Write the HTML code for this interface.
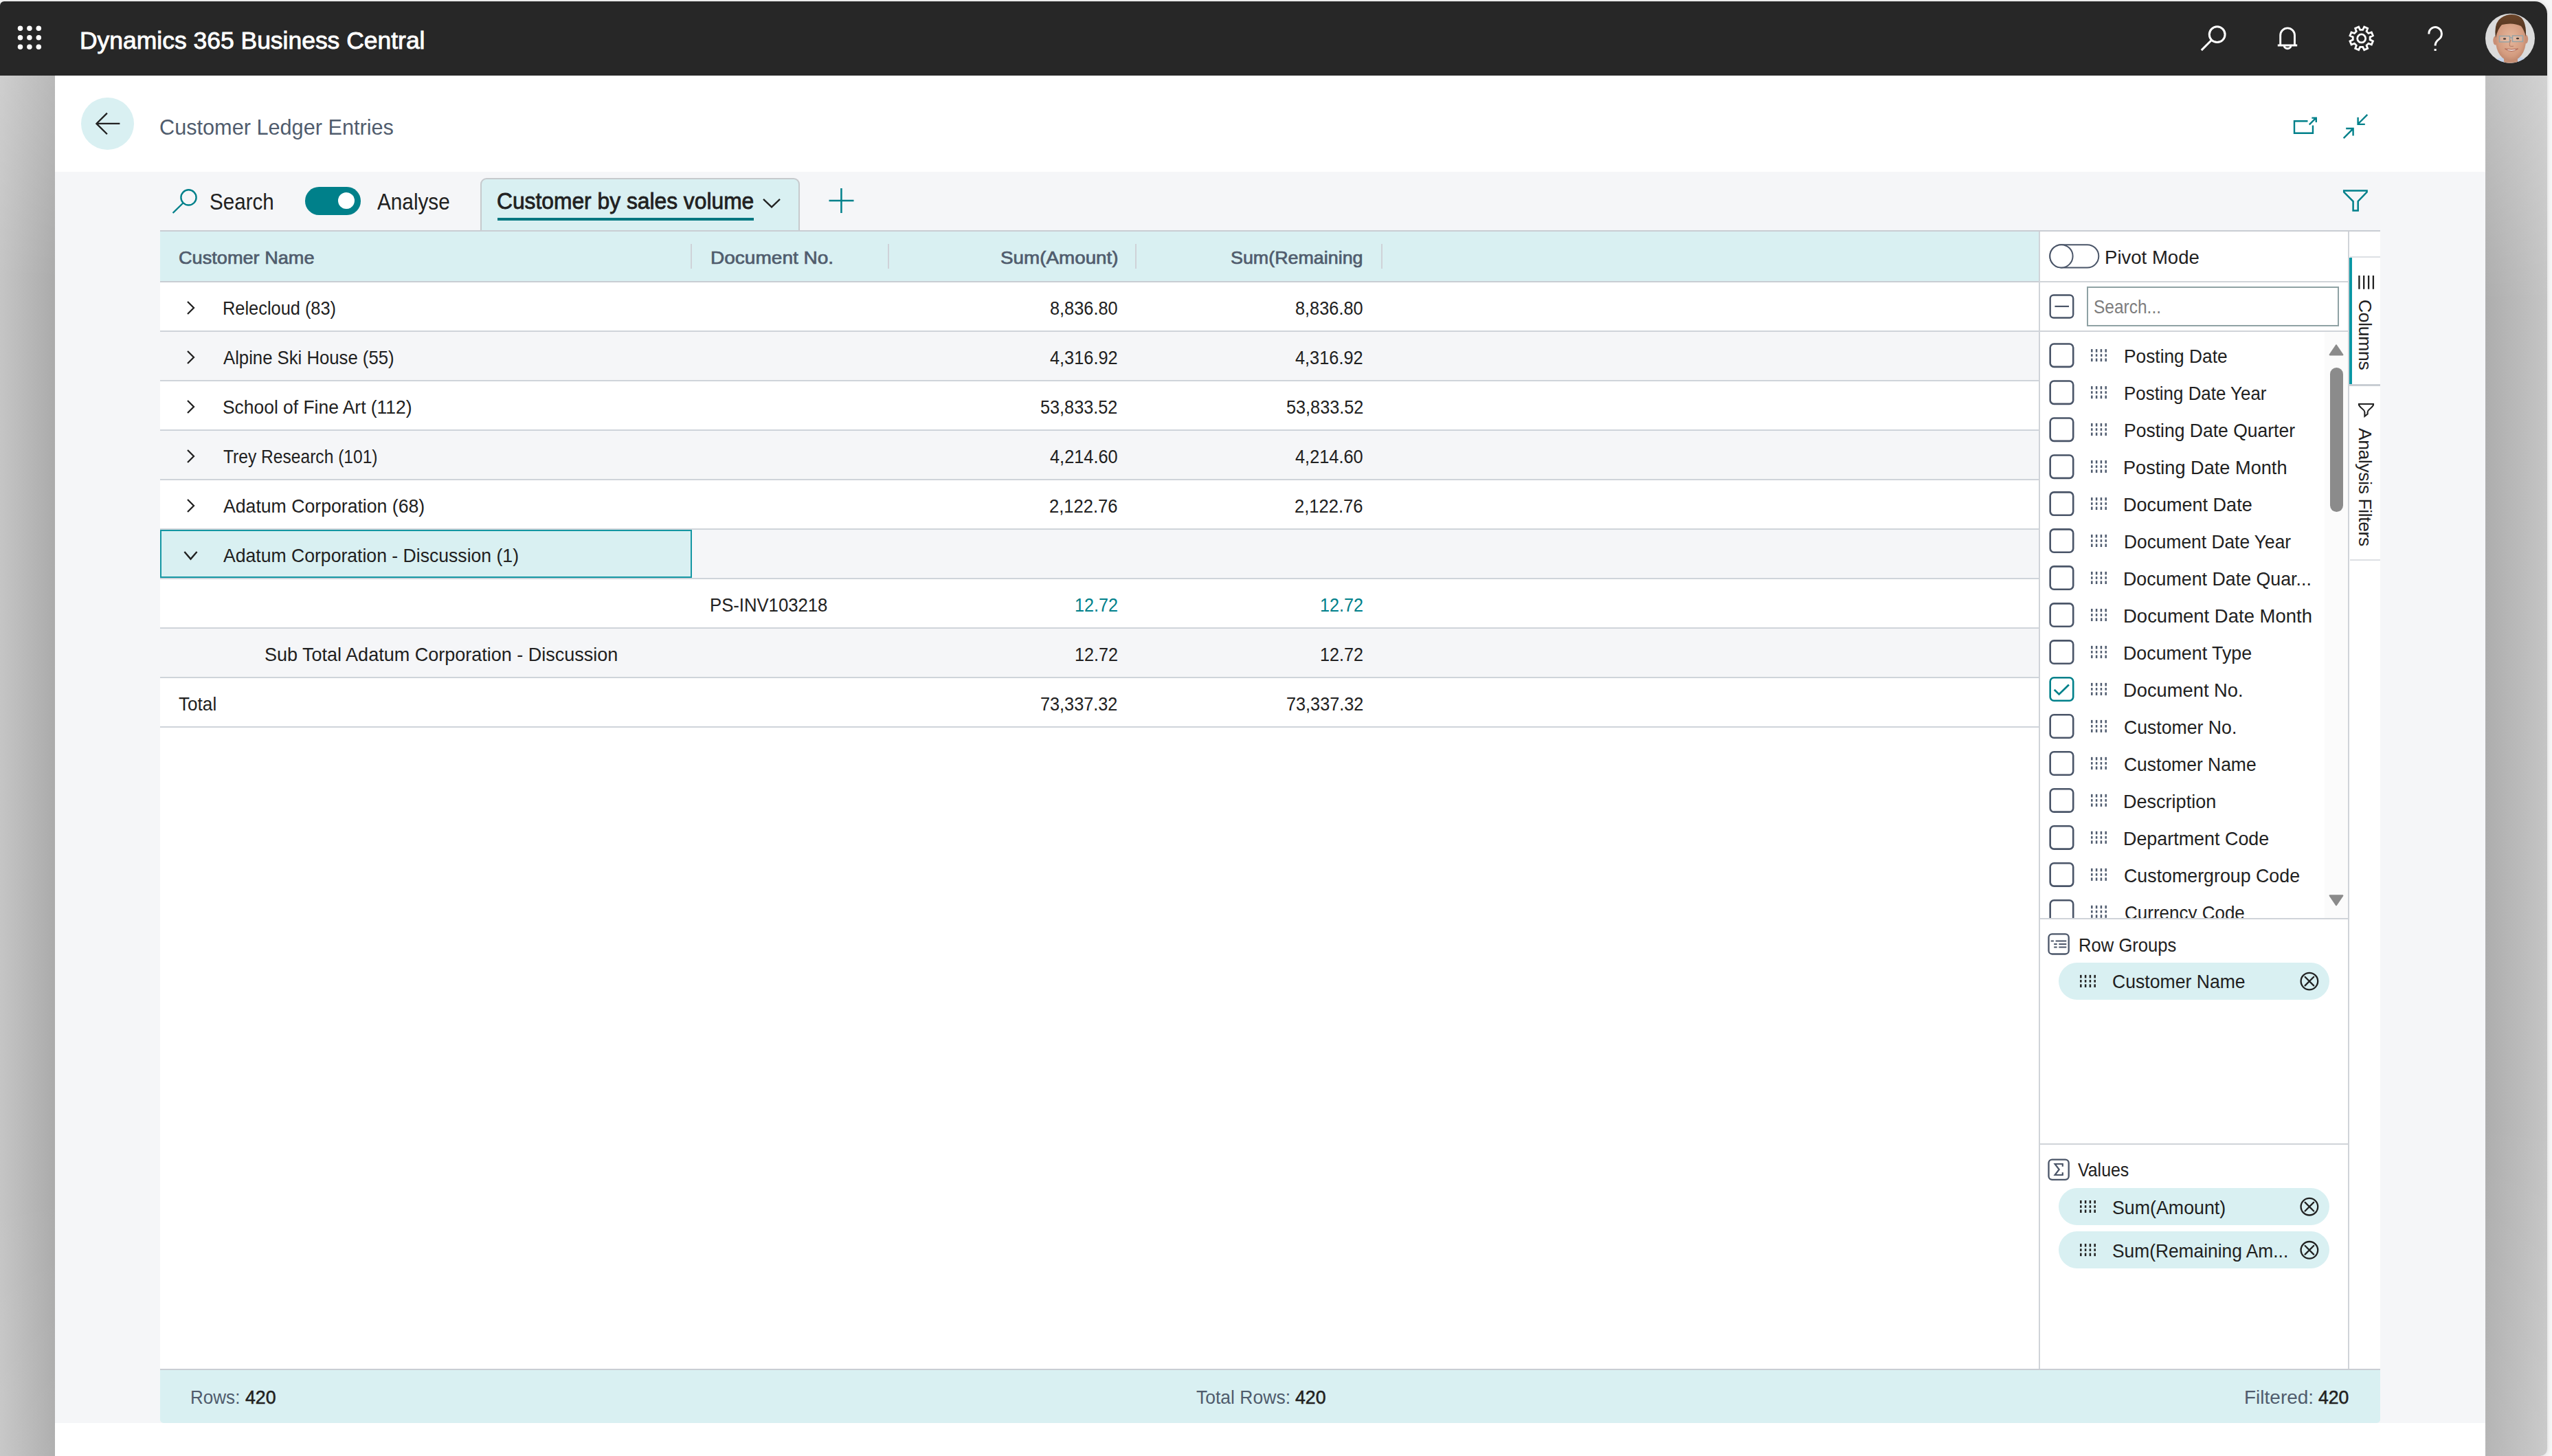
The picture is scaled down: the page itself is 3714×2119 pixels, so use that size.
<!DOCTYPE html>
<html lang="en"><head><meta charset="utf-8"><title>Customer Ledger Entries - Dynamics 365 Business Central</title>
<style>
html,body{margin:0;padding:0}
body{width:3714px;height:2119px;overflow:hidden;background:#f7f7f7;position:relative;font-family:"Liberation Sans",sans-serif;}
.a{position:absolute}
.t{position:absolute;line-height:1;white-space:nowrap;font-family:"Liberation Sans",sans-serif;font-kerning:normal;transform-origin:0 0}
svg{position:absolute;left:0;top:0;overflow:visible}
#win{position:absolute;left:0;top:2px;width:3707px;height:2117px;overflow:hidden;border-radius:6px 18px 10px 0;background:#fff;box-shadow:0 0 7px rgba(0,0,0,.13)}
</style></head><body>
<div id="win">
<div id="shift" class="a" style="left:0;top:-2px;width:3714px;height:2119px">

<div class="a" style="left:0px;top:110px;width:80px;height:2009px;background:linear-gradient(180deg,rgba(255,255,255,.16) 0,rgba(255,255,255,0) 300px),linear-gradient(0deg,rgba(255,255,255,.06) 0,rgba(255,255,255,0) 400px),linear-gradient(90deg,#c5c5c5 0%,#ababab 100%);"></div>
<div class="a" style="left:3617px;top:110px;width:90px;height:2009px;background:linear-gradient(180deg,rgba(255,255,255,.24) 0,rgba(255,255,255,0) 330px),linear-gradient(0deg,rgba(255,255,255,.10) 0,rgba(255,255,255,0) 500px),linear-gradient(90deg,#adadad 0%,#c5c5c5 100%);"></div>
<div class="a" style="left:80px;top:110px;width:3537px;height:140px;background:#ffffff;"></div>
<div class="a" style="left:80px;top:250px;width:3537px;height:1821px;background:#f5f6f8;"></div>
<div class="a" style="left:80px;top:2071px;width:3537px;height:48px;background:#ffffff;"></div>
<div class="a" style="left:0px;top:2px;width:3707px;height:108px;background:#272727;"></div>
<div class="a" style="left:118.2px;top:141.8px;width:76.60000000000001px;height:76.6px;background:#d9f0f2;border-radius:50%"></div>
<div class="a" style="left:699px;top:259px;width:461px;height:80px;background:#d9f0f2;border:2px solid #c6cacd;border-bottom:none;border-radius:9px 9px 0 0"></div>
<div class="a" style="left:724px;top:317px;width:373px;height:4px;background:#007780;"></div>
<div class="a" style="left:233px;top:336.6px;width:3231px;height:1655.4px;background:#ffffff;"></div>
<div class="a" style="left:233px;top:334.6px;width:3231px;height:2.0px;background:#c9cdd3;"></div>
<div class="a" style="left:233px;top:336.6px;width:2734px;height:72.39999999999998px;background:#d9f0f2;"></div>
<div class="a" style="left:233px;top:409px;width:2734px;height:2px;background:#c9cdd3;"></div>
<div class="a" style="left:233px;top:411px;width:2734px;height:70px;background:#ffffff;"></div>
<div class="a" style="left:233px;top:481px;width:2734px;height:2px;background:#cfd4da;"></div>
<div class="a" style="left:233px;top:483px;width:2734px;height:70px;background:#f5f6f8;"></div>
<div class="a" style="left:233px;top:553px;width:2734px;height:2px;background:#cfd4da;"></div>
<div class="a" style="left:233px;top:555px;width:2734px;height:70px;background:#ffffff;"></div>
<div class="a" style="left:233px;top:625px;width:2734px;height:2px;background:#cfd4da;"></div>
<div class="a" style="left:233px;top:627px;width:2734px;height:70px;background:#f5f6f8;"></div>
<div class="a" style="left:233px;top:697px;width:2734px;height:2px;background:#cfd4da;"></div>
<div class="a" style="left:233px;top:699px;width:2734px;height:70px;background:#ffffff;"></div>
<div class="a" style="left:233px;top:769px;width:2734px;height:2px;background:#cfd4da;"></div>
<div class="a" style="left:233px;top:771px;width:2734px;height:70px;background:#f5f6f8;"></div>
<div class="a" style="left:233px;top:841px;width:2734px;height:2px;background:#cfd4da;"></div>
<div class="a" style="left:233px;top:843px;width:2734px;height:70px;background:#ffffff;"></div>
<div class="a" style="left:233px;top:913px;width:2734px;height:2px;background:#cfd4da;"></div>
<div class="a" style="left:233px;top:915px;width:2734px;height:70px;background:#f5f6f8;"></div>
<div class="a" style="left:233px;top:985px;width:2734px;height:2px;background:#cfd4da;"></div>
<div class="a" style="left:233px;top:987px;width:2734px;height:70px;background:#ffffff;"></div>
<div class="a" style="left:233px;top:1057px;width:2734px;height:2px;background:#cfd4da;"></div>
<div class="a" style="left:1005px;top:355px;width:2px;height:35.5px;background:#cfd2d8;"></div>
<div class="a" style="left:1292px;top:355px;width:2px;height:35.5px;background:#cfd2d8;"></div>
<div class="a" style="left:1652px;top:355px;width:2px;height:35.5px;background:#cfd2d8;"></div>
<div class="a" style="left:2009.5px;top:355px;width:2.0px;height:35.5px;background:#cfd2d8;"></div>
<div class="a" style="left:233px;top:771px;width:770px;height:66px;background:#d9f0f2;border:2px solid #1497a3"></div>
<div class="a" style="left:2967px;top:336.6px;width:2px;height:1655.4px;background:#d0d4d9;"></div>
<div class="a" style="left:3417px;top:336.6px;width:2px;height:1655.4px;background:#d0d4d9;"></div>
<div class="a" style="left:2969px;top:409px;width:449px;height:2px;background:#d0d4d9;"></div>
<div class="a" style="left:2969px;top:481px;width:449px;height:2px;background:#d0d4d9;"></div>
<div class="a" style="left:2969px;top:1336px;width:449px;height:2px;background:#d0d4d9;"></div>
<div class="a" style="left:2969px;top:1664px;width:449px;height:2px;background:#d0d4d9;"></div>
<div class="a" style="left:233px;top:1992px;width:3231px;height:79px;background:#d9f0f2;border-radius:0 0 5px 5px"></div>
<div class="a" style="left:233px;top:1992px;width:3231px;height:2px;background:#c9cdd3;"></div>
<div class="a" style="left:3383px;top:483px;width:34px;height:853px;background:#fbfbfb;"></div>
<div class="a" style="left:3390.7px;top:534.5px;width:19.0px;height:210.5px;background:#8b8b8b;border-radius:9.5px"></div>
<div class="a" style="left:3037px;top:417px;width:363px;height:54px;background:#fff;border:2px solid #8fa2a4"></div>
<div class="a" style="left:2996px;top:1401px;width:394.1999999999998px;height:53.59999999999991px;background:#d9f0f2;border-radius:27px"></div>
<div class="a" style="left:2996px;top:1729.2px;width:394.1999999999998px;height:53.59999999999991px;background:#d9f0f2;border-radius:27px"></div>
<div class="a" style="left:2996px;top:1792.3px;width:394.1999999999998px;height:53.59999999999991px;background:#d9f0f2;border-radius:27px"></div>
<div class="a" style="left:3420px;top:373px;width:44px;height:2px;background:#dde0e4;"></div>
<div class="a" style="left:3419px;top:375px;width:4px;height:184px;background:#0b97a4;"></div>
<div class="a" style="left:3419px;top:558.5px;width:45px;height:3.5px;background:#c8cdd3;"></div>
<div class="a" style="left:3420px;top:814px;width:44px;height:2px;background:#dde0e4;"></div>
<div class="a" style="left:443.5px;top:272px;width:81.0px;height:40.60000000000002px;background:#00808a;border-radius:20.3px"></div>
<div class="a" style="left:491.6px;top:279.7px;width:24.600000000000023px;height:24.600000000000023px;background:#ffffff;border-radius:50%"></div>
<svg width="3714" height="2119" viewBox="0 0 3714 2119"><defs><clipPath id="listclip"><rect x="2969" y="483" width="449" height="853"/></clipPath></defs>
<circle cx="29.5" cy="41.3" r="3.75" fill="#fff"/>
<circle cx="29.5" cy="54.7" r="3.75" fill="#fff"/>
<circle cx="29.5" cy="68.2" r="3.75" fill="#fff"/>
<circle cx="42.9" cy="41.3" r="3.75" fill="#fff"/>
<circle cx="42.9" cy="54.7" r="3.75" fill="#fff"/>
<circle cx="42.9" cy="68.2" r="3.75" fill="#fff"/>
<circle cx="56.3" cy="41.3" r="3.75" fill="#fff"/>
<circle cx="56.3" cy="54.7" r="3.75" fill="#fff"/>
<circle cx="56.3" cy="68.2" r="3.75" fill="#fff"/>
<path d="M174.4,179.9 H140.5 M155.9,164.6 L140.4,179.9 L155.9,195.2" stroke="#212121" stroke-width="2.3" fill="none" />
<circle cx="274.5" cy="287.4" r="11.1" stroke="#00808a" stroke-width="2.4" fill="none"/>
<path d="M266.4,295.5 L251.6,310" stroke="#00808a" stroke-width="2.4" fill="none" />
<path d="M1111,289.8 L1123,301.4 L1135,289.8" stroke="#212121" stroke-width="2.3" fill="none" />
<path d="M1206.5,292 H1242.5 M1224.4,274 V310" stroke="#00808a" stroke-width="2.5" fill="none" />
<path d="M273,439 L282,448 L273,457" stroke="#212121" stroke-width="2.3" fill="none" />
<path d="M273,511 L282,520 L273,529" stroke="#212121" stroke-width="2.3" fill="none" />
<path d="M273,583 L282,592 L273,601" stroke="#212121" stroke-width="2.3" fill="none" />
<path d="M273,655 L282,664 L273,673" stroke="#212121" stroke-width="2.3" fill="none" />
<path d="M273,727 L282,736 L273,745" stroke="#212121" stroke-width="2.3" fill="none" />
<path d="M268.4,803 L277.5,813.6 L286.6,803" stroke="#212121" stroke-width="2.4" fill="none" />
<circle cx="3226.7" cy="50.2" r="11.4" stroke="#fff" stroke-width="3" fill="none"/>
<path d="M3218.4,58.5 L3203.8,73.1" stroke="#fff" stroke-width="3" fill="none" />
<path d="M3318.7,66 V51.3 a10.4,10.4 0 0 1 20.8,0 V66 M3314.8,66 H3343.2 M3324.2,66.5 a4.9,4.2 0 0 0 9.8,0" stroke="#fff" stroke-width="2.9" fill="none" />
<path d="M3453.69,53.21 L3453.69,58.59 L3448.95,58.84 L3447.44,62.48 L3450.62,66.01 L3446.81,69.82 L3443.28,66.64 L3439.64,68.15 L3439.39,72.89 L3434.01,72.89 L3433.76,68.15 L3430.12,66.64 L3426.59,69.82 L3422.78,66.01 L3425.96,62.48 L3424.45,58.84 L3419.71,58.59 L3419.71,53.21 L3424.45,52.96 L3425.96,49.32 L3422.78,45.79 L3426.59,41.98 L3430.12,45.16 L3433.76,43.65 L3434.01,38.91 L3439.39,38.91 L3439.64,43.65 L3443.28,45.16 L3446.81,41.98 L3450.62,45.79 L3447.44,49.32 L3448.95,52.96 Z" stroke="#fff" stroke-width="2.8" fill="none" stroke-linejoin="miter" transform="rotate(22.5 3436.7 55.9)"/>
<circle cx="3436.7" cy="55.9" r="6" stroke="#fff" stroke-width="2.8" fill="none"/>
<path d="M3534.8,49.5 a9.3,9.6 0 1 1 14.6,7.6 q-5.3,3.8 -5.3,9.4" stroke="#fff" stroke-width="3" fill="none" />
<rect x="3542.6" y="71.1" width="3.1" height="2.9" fill="#fff"/>
<path d="M3358.5,176.2 H3339 V193.7 H3366 V182.4" stroke="#00808a" stroke-width="2.4" fill="none" />
<path d="M3360.8,181.4 L3370.8,171.4 M3364.4,171.6 H3370.8 V178" stroke="#00808a" stroke-width="2.4" fill="none" />
<path d="M3445.3,166.8 L3431.6,180.5 M3431.6,170.7 V180.9 H3441.8" stroke="#00808a" stroke-width="2.4" fill="none" />
<path d="M3410.7,201.1 L3424.4,187.4 M3414.2,187 H3424.6 V197.4" stroke="#00808a" stroke-width="2.4" fill="none" />
<path d="M3411.2,277.6 H3444.6 V279.6 L3431.7,293 V306.4 H3424.6 V293 L3411.2,279.6 Z" stroke="#00808a" stroke-width="2.5" fill="none" />
<rect x="2983.3" y="356.2" width="71" height="33.3" rx="16.65" stroke="#4a5568" stroke-width="2" fill="#fff"/>
<circle cx="2999.95" cy="372.85" r="16.65" stroke="#4a5568" stroke-width="2" fill="#fff"/>
<rect x="2983.7" y="429.5" width="33.5" height="33" rx="5" stroke="#4a5568" stroke-width="2.4" fill="#fff"/>
<path d="M2990.4,445.9 H3011" stroke="#4a5568" stroke-width="2.2" fill="none" />
<g clip-path="url(#listclip)">
<rect x="2983.7" y="500.50" width="33.5" height="33.4" rx="5.5" stroke="#4a5568" stroke-width="2.6" fill="#fff"/>
<rect x="3043.05" y="508.10" width="2.5" height="4.50" fill="#4f5b6e"/>
<rect x="3043.05" y="515.30" width="2.5" height="3.60" fill="#4f5b6e"/>
<rect x="3043.05" y="521.60" width="2.5" height="4.50" fill="#4f5b6e"/>
<rect x="3049.85" y="508.10" width="2.5" height="4.50" fill="#4f5b6e"/>
<rect x="3049.85" y="515.30" width="2.5" height="3.60" fill="#4f5b6e"/>
<rect x="3049.85" y="521.60" width="2.5" height="4.50" fill="#4f5b6e"/>
<rect x="3056.65" y="508.10" width="2.5" height="4.50" fill="#4f5b6e"/>
<rect x="3056.65" y="515.30" width="2.5" height="3.60" fill="#4f5b6e"/>
<rect x="3056.65" y="521.60" width="2.5" height="4.50" fill="#4f5b6e"/>
<rect x="3063.45" y="508.10" width="2.5" height="4.50" fill="#4f5b6e"/>
<rect x="3063.45" y="515.30" width="2.5" height="3.60" fill="#4f5b6e"/>
<rect x="3063.45" y="521.60" width="2.5" height="4.50" fill="#4f5b6e"/>
<rect x="2983.7" y="554.48" width="33.5" height="33.4" rx="5.5" stroke="#4a5568" stroke-width="2.6" fill="#fff"/>
<rect x="3043.05" y="562.08" width="2.5" height="4.50" fill="#4f5b6e"/>
<rect x="3043.05" y="569.28" width="2.5" height="3.60" fill="#4f5b6e"/>
<rect x="3043.05" y="575.58" width="2.5" height="4.50" fill="#4f5b6e"/>
<rect x="3049.85" y="562.08" width="2.5" height="4.50" fill="#4f5b6e"/>
<rect x="3049.85" y="569.28" width="2.5" height="3.60" fill="#4f5b6e"/>
<rect x="3049.85" y="575.58" width="2.5" height="4.50" fill="#4f5b6e"/>
<rect x="3056.65" y="562.08" width="2.5" height="4.50" fill="#4f5b6e"/>
<rect x="3056.65" y="569.28" width="2.5" height="3.60" fill="#4f5b6e"/>
<rect x="3056.65" y="575.58" width="2.5" height="4.50" fill="#4f5b6e"/>
<rect x="3063.45" y="562.08" width="2.5" height="4.50" fill="#4f5b6e"/>
<rect x="3063.45" y="569.28" width="2.5" height="3.60" fill="#4f5b6e"/>
<rect x="3063.45" y="575.58" width="2.5" height="4.50" fill="#4f5b6e"/>
<rect x="2983.7" y="608.46" width="33.5" height="33.4" rx="5.5" stroke="#4a5568" stroke-width="2.6" fill="#fff"/>
<rect x="3043.05" y="616.06" width="2.5" height="4.50" fill="#4f5b6e"/>
<rect x="3043.05" y="623.26" width="2.5" height="3.60" fill="#4f5b6e"/>
<rect x="3043.05" y="629.56" width="2.5" height="4.50" fill="#4f5b6e"/>
<rect x="3049.85" y="616.06" width="2.5" height="4.50" fill="#4f5b6e"/>
<rect x="3049.85" y="623.26" width="2.5" height="3.60" fill="#4f5b6e"/>
<rect x="3049.85" y="629.56" width="2.5" height="4.50" fill="#4f5b6e"/>
<rect x="3056.65" y="616.06" width="2.5" height="4.50" fill="#4f5b6e"/>
<rect x="3056.65" y="623.26" width="2.5" height="3.60" fill="#4f5b6e"/>
<rect x="3056.65" y="629.56" width="2.5" height="4.50" fill="#4f5b6e"/>
<rect x="3063.45" y="616.06" width="2.5" height="4.50" fill="#4f5b6e"/>
<rect x="3063.45" y="623.26" width="2.5" height="3.60" fill="#4f5b6e"/>
<rect x="3063.45" y="629.56" width="2.5" height="4.50" fill="#4f5b6e"/>
<rect x="2983.7" y="662.44" width="33.5" height="33.4" rx="5.5" stroke="#4a5568" stroke-width="2.6" fill="#fff"/>
<rect x="3043.05" y="670.04" width="2.5" height="4.50" fill="#4f5b6e"/>
<rect x="3043.05" y="677.24" width="2.5" height="3.60" fill="#4f5b6e"/>
<rect x="3043.05" y="683.54" width="2.5" height="4.50" fill="#4f5b6e"/>
<rect x="3049.85" y="670.04" width="2.5" height="4.50" fill="#4f5b6e"/>
<rect x="3049.85" y="677.24" width="2.5" height="3.60" fill="#4f5b6e"/>
<rect x="3049.85" y="683.54" width="2.5" height="4.50" fill="#4f5b6e"/>
<rect x="3056.65" y="670.04" width="2.5" height="4.50" fill="#4f5b6e"/>
<rect x="3056.65" y="677.24" width="2.5" height="3.60" fill="#4f5b6e"/>
<rect x="3056.65" y="683.54" width="2.5" height="4.50" fill="#4f5b6e"/>
<rect x="3063.45" y="670.04" width="2.5" height="4.50" fill="#4f5b6e"/>
<rect x="3063.45" y="677.24" width="2.5" height="3.60" fill="#4f5b6e"/>
<rect x="3063.45" y="683.54" width="2.5" height="4.50" fill="#4f5b6e"/>
<rect x="2983.7" y="716.42" width="33.5" height="33.4" rx="5.5" stroke="#4a5568" stroke-width="2.6" fill="#fff"/>
<rect x="3043.05" y="724.02" width="2.5" height="4.50" fill="#4f5b6e"/>
<rect x="3043.05" y="731.22" width="2.5" height="3.60" fill="#4f5b6e"/>
<rect x="3043.05" y="737.52" width="2.5" height="4.50" fill="#4f5b6e"/>
<rect x="3049.85" y="724.02" width="2.5" height="4.50" fill="#4f5b6e"/>
<rect x="3049.85" y="731.22" width="2.5" height="3.60" fill="#4f5b6e"/>
<rect x="3049.85" y="737.52" width="2.5" height="4.50" fill="#4f5b6e"/>
<rect x="3056.65" y="724.02" width="2.5" height="4.50" fill="#4f5b6e"/>
<rect x="3056.65" y="731.22" width="2.5" height="3.60" fill="#4f5b6e"/>
<rect x="3056.65" y="737.52" width="2.5" height="4.50" fill="#4f5b6e"/>
<rect x="3063.45" y="724.02" width="2.5" height="4.50" fill="#4f5b6e"/>
<rect x="3063.45" y="731.22" width="2.5" height="3.60" fill="#4f5b6e"/>
<rect x="3063.45" y="737.52" width="2.5" height="4.50" fill="#4f5b6e"/>
<rect x="2983.7" y="770.40" width="33.5" height="33.4" rx="5.5" stroke="#4a5568" stroke-width="2.6" fill="#fff"/>
<rect x="3043.05" y="778.00" width="2.5" height="4.50" fill="#4f5b6e"/>
<rect x="3043.05" y="785.20" width="2.5" height="3.60" fill="#4f5b6e"/>
<rect x="3043.05" y="791.50" width="2.5" height="4.50" fill="#4f5b6e"/>
<rect x="3049.85" y="778.00" width="2.5" height="4.50" fill="#4f5b6e"/>
<rect x="3049.85" y="785.20" width="2.5" height="3.60" fill="#4f5b6e"/>
<rect x="3049.85" y="791.50" width="2.5" height="4.50" fill="#4f5b6e"/>
<rect x="3056.65" y="778.00" width="2.5" height="4.50" fill="#4f5b6e"/>
<rect x="3056.65" y="785.20" width="2.5" height="3.60" fill="#4f5b6e"/>
<rect x="3056.65" y="791.50" width="2.5" height="4.50" fill="#4f5b6e"/>
<rect x="3063.45" y="778.00" width="2.5" height="4.50" fill="#4f5b6e"/>
<rect x="3063.45" y="785.20" width="2.5" height="3.60" fill="#4f5b6e"/>
<rect x="3063.45" y="791.50" width="2.5" height="4.50" fill="#4f5b6e"/>
<rect x="2983.7" y="824.38" width="33.5" height="33.4" rx="5.5" stroke="#4a5568" stroke-width="2.6" fill="#fff"/>
<rect x="3043.05" y="831.98" width="2.5" height="4.50" fill="#4f5b6e"/>
<rect x="3043.05" y="839.18" width="2.5" height="3.60" fill="#4f5b6e"/>
<rect x="3043.05" y="845.48" width="2.5" height="4.50" fill="#4f5b6e"/>
<rect x="3049.85" y="831.98" width="2.5" height="4.50" fill="#4f5b6e"/>
<rect x="3049.85" y="839.18" width="2.5" height="3.60" fill="#4f5b6e"/>
<rect x="3049.85" y="845.48" width="2.5" height="4.50" fill="#4f5b6e"/>
<rect x="3056.65" y="831.98" width="2.5" height="4.50" fill="#4f5b6e"/>
<rect x="3056.65" y="839.18" width="2.5" height="3.60" fill="#4f5b6e"/>
<rect x="3056.65" y="845.48" width="2.5" height="4.50" fill="#4f5b6e"/>
<rect x="3063.45" y="831.98" width="2.5" height="4.50" fill="#4f5b6e"/>
<rect x="3063.45" y="839.18" width="2.5" height="3.60" fill="#4f5b6e"/>
<rect x="3063.45" y="845.48" width="2.5" height="4.50" fill="#4f5b6e"/>
<rect x="2983.7" y="878.36" width="33.5" height="33.4" rx="5.5" stroke="#4a5568" stroke-width="2.6" fill="#fff"/>
<rect x="3043.05" y="885.96" width="2.5" height="4.50" fill="#4f5b6e"/>
<rect x="3043.05" y="893.16" width="2.5" height="3.60" fill="#4f5b6e"/>
<rect x="3043.05" y="899.46" width="2.5" height="4.50" fill="#4f5b6e"/>
<rect x="3049.85" y="885.96" width="2.5" height="4.50" fill="#4f5b6e"/>
<rect x="3049.85" y="893.16" width="2.5" height="3.60" fill="#4f5b6e"/>
<rect x="3049.85" y="899.46" width="2.5" height="4.50" fill="#4f5b6e"/>
<rect x="3056.65" y="885.96" width="2.5" height="4.50" fill="#4f5b6e"/>
<rect x="3056.65" y="893.16" width="2.5" height="3.60" fill="#4f5b6e"/>
<rect x="3056.65" y="899.46" width="2.5" height="4.50" fill="#4f5b6e"/>
<rect x="3063.45" y="885.96" width="2.5" height="4.50" fill="#4f5b6e"/>
<rect x="3063.45" y="893.16" width="2.5" height="3.60" fill="#4f5b6e"/>
<rect x="3063.45" y="899.46" width="2.5" height="4.50" fill="#4f5b6e"/>
<rect x="2983.7" y="932.34" width="33.5" height="33.4" rx="5.5" stroke="#4a5568" stroke-width="2.6" fill="#fff"/>
<rect x="3043.05" y="939.94" width="2.5" height="4.50" fill="#4f5b6e"/>
<rect x="3043.05" y="947.14" width="2.5" height="3.60" fill="#4f5b6e"/>
<rect x="3043.05" y="953.44" width="2.5" height="4.50" fill="#4f5b6e"/>
<rect x="3049.85" y="939.94" width="2.5" height="4.50" fill="#4f5b6e"/>
<rect x="3049.85" y="947.14" width="2.5" height="3.60" fill="#4f5b6e"/>
<rect x="3049.85" y="953.44" width="2.5" height="4.50" fill="#4f5b6e"/>
<rect x="3056.65" y="939.94" width="2.5" height="4.50" fill="#4f5b6e"/>
<rect x="3056.65" y="947.14" width="2.5" height="3.60" fill="#4f5b6e"/>
<rect x="3056.65" y="953.44" width="2.5" height="4.50" fill="#4f5b6e"/>
<rect x="3063.45" y="939.94" width="2.5" height="4.50" fill="#4f5b6e"/>
<rect x="3063.45" y="947.14" width="2.5" height="3.60" fill="#4f5b6e"/>
<rect x="3063.45" y="953.44" width="2.5" height="4.50" fill="#4f5b6e"/>
<rect x="2983.7" y="986.32" width="33.5" height="33.4" rx="5.5" stroke="#00808a" stroke-width="2.6" fill="#fff"/>
<path d="M2989.7,1003.82 L2996.6,1010.42 L3010.9,996.42" stroke="#00808a" stroke-width="2.7" fill="none" />
<rect x="3043.05" y="993.92" width="2.5" height="4.50" fill="#4f5b6e"/>
<rect x="3043.05" y="1001.12" width="2.5" height="3.60" fill="#4f5b6e"/>
<rect x="3043.05" y="1007.42" width="2.5" height="4.50" fill="#4f5b6e"/>
<rect x="3049.85" y="993.92" width="2.5" height="4.50" fill="#4f5b6e"/>
<rect x="3049.85" y="1001.12" width="2.5" height="3.60" fill="#4f5b6e"/>
<rect x="3049.85" y="1007.42" width="2.5" height="4.50" fill="#4f5b6e"/>
<rect x="3056.65" y="993.92" width="2.5" height="4.50" fill="#4f5b6e"/>
<rect x="3056.65" y="1001.12" width="2.5" height="3.60" fill="#4f5b6e"/>
<rect x="3056.65" y="1007.42" width="2.5" height="4.50" fill="#4f5b6e"/>
<rect x="3063.45" y="993.92" width="2.5" height="4.50" fill="#4f5b6e"/>
<rect x="3063.45" y="1001.12" width="2.5" height="3.60" fill="#4f5b6e"/>
<rect x="3063.45" y="1007.42" width="2.5" height="4.50" fill="#4f5b6e"/>
<rect x="2983.7" y="1040.30" width="33.5" height="33.4" rx="5.5" stroke="#4a5568" stroke-width="2.6" fill="#fff"/>
<rect x="3043.05" y="1047.90" width="2.5" height="4.50" fill="#4f5b6e"/>
<rect x="3043.05" y="1055.10" width="2.5" height="3.60" fill="#4f5b6e"/>
<rect x="3043.05" y="1061.40" width="2.5" height="4.50" fill="#4f5b6e"/>
<rect x="3049.85" y="1047.90" width="2.5" height="4.50" fill="#4f5b6e"/>
<rect x="3049.85" y="1055.10" width="2.5" height="3.60" fill="#4f5b6e"/>
<rect x="3049.85" y="1061.40" width="2.5" height="4.50" fill="#4f5b6e"/>
<rect x="3056.65" y="1047.90" width="2.5" height="4.50" fill="#4f5b6e"/>
<rect x="3056.65" y="1055.10" width="2.5" height="3.60" fill="#4f5b6e"/>
<rect x="3056.65" y="1061.40" width="2.5" height="4.50" fill="#4f5b6e"/>
<rect x="3063.45" y="1047.90" width="2.5" height="4.50" fill="#4f5b6e"/>
<rect x="3063.45" y="1055.10" width="2.5" height="3.60" fill="#4f5b6e"/>
<rect x="3063.45" y="1061.40" width="2.5" height="4.50" fill="#4f5b6e"/>
<rect x="2983.7" y="1094.28" width="33.5" height="33.4" rx="5.5" stroke="#4a5568" stroke-width="2.6" fill="#fff"/>
<rect x="3043.05" y="1101.88" width="2.5" height="4.50" fill="#4f5b6e"/>
<rect x="3043.05" y="1109.08" width="2.5" height="3.60" fill="#4f5b6e"/>
<rect x="3043.05" y="1115.38" width="2.5" height="4.50" fill="#4f5b6e"/>
<rect x="3049.85" y="1101.88" width="2.5" height="4.50" fill="#4f5b6e"/>
<rect x="3049.85" y="1109.08" width="2.5" height="3.60" fill="#4f5b6e"/>
<rect x="3049.85" y="1115.38" width="2.5" height="4.50" fill="#4f5b6e"/>
<rect x="3056.65" y="1101.88" width="2.5" height="4.50" fill="#4f5b6e"/>
<rect x="3056.65" y="1109.08" width="2.5" height="3.60" fill="#4f5b6e"/>
<rect x="3056.65" y="1115.38" width="2.5" height="4.50" fill="#4f5b6e"/>
<rect x="3063.45" y="1101.88" width="2.5" height="4.50" fill="#4f5b6e"/>
<rect x="3063.45" y="1109.08" width="2.5" height="3.60" fill="#4f5b6e"/>
<rect x="3063.45" y="1115.38" width="2.5" height="4.50" fill="#4f5b6e"/>
<rect x="2983.7" y="1148.26" width="33.5" height="33.4" rx="5.5" stroke="#4a5568" stroke-width="2.6" fill="#fff"/>
<rect x="3043.05" y="1155.86" width="2.5" height="4.50" fill="#4f5b6e"/>
<rect x="3043.05" y="1163.06" width="2.5" height="3.60" fill="#4f5b6e"/>
<rect x="3043.05" y="1169.36" width="2.5" height="4.50" fill="#4f5b6e"/>
<rect x="3049.85" y="1155.86" width="2.5" height="4.50" fill="#4f5b6e"/>
<rect x="3049.85" y="1163.06" width="2.5" height="3.60" fill="#4f5b6e"/>
<rect x="3049.85" y="1169.36" width="2.5" height="4.50" fill="#4f5b6e"/>
<rect x="3056.65" y="1155.86" width="2.5" height="4.50" fill="#4f5b6e"/>
<rect x="3056.65" y="1163.06" width="2.5" height="3.60" fill="#4f5b6e"/>
<rect x="3056.65" y="1169.36" width="2.5" height="4.50" fill="#4f5b6e"/>
<rect x="3063.45" y="1155.86" width="2.5" height="4.50" fill="#4f5b6e"/>
<rect x="3063.45" y="1163.06" width="2.5" height="3.60" fill="#4f5b6e"/>
<rect x="3063.45" y="1169.36" width="2.5" height="4.50" fill="#4f5b6e"/>
<rect x="2983.7" y="1202.24" width="33.5" height="33.4" rx="5.5" stroke="#4a5568" stroke-width="2.6" fill="#fff"/>
<rect x="3043.05" y="1209.84" width="2.5" height="4.50" fill="#4f5b6e"/>
<rect x="3043.05" y="1217.04" width="2.5" height="3.60" fill="#4f5b6e"/>
<rect x="3043.05" y="1223.34" width="2.5" height="4.50" fill="#4f5b6e"/>
<rect x="3049.85" y="1209.84" width="2.5" height="4.50" fill="#4f5b6e"/>
<rect x="3049.85" y="1217.04" width="2.5" height="3.60" fill="#4f5b6e"/>
<rect x="3049.85" y="1223.34" width="2.5" height="4.50" fill="#4f5b6e"/>
<rect x="3056.65" y="1209.84" width="2.5" height="4.50" fill="#4f5b6e"/>
<rect x="3056.65" y="1217.04" width="2.5" height="3.60" fill="#4f5b6e"/>
<rect x="3056.65" y="1223.34" width="2.5" height="4.50" fill="#4f5b6e"/>
<rect x="3063.45" y="1209.84" width="2.5" height="4.50" fill="#4f5b6e"/>
<rect x="3063.45" y="1217.04" width="2.5" height="3.60" fill="#4f5b6e"/>
<rect x="3063.45" y="1223.34" width="2.5" height="4.50" fill="#4f5b6e"/>
<rect x="2983.7" y="1256.22" width="33.5" height="33.4" rx="5.5" stroke="#4a5568" stroke-width="2.6" fill="#fff"/>
<rect x="3043.05" y="1263.82" width="2.5" height="4.50" fill="#4f5b6e"/>
<rect x="3043.05" y="1271.02" width="2.5" height="3.60" fill="#4f5b6e"/>
<rect x="3043.05" y="1277.32" width="2.5" height="4.50" fill="#4f5b6e"/>
<rect x="3049.85" y="1263.82" width="2.5" height="4.50" fill="#4f5b6e"/>
<rect x="3049.85" y="1271.02" width="2.5" height="3.60" fill="#4f5b6e"/>
<rect x="3049.85" y="1277.32" width="2.5" height="4.50" fill="#4f5b6e"/>
<rect x="3056.65" y="1263.82" width="2.5" height="4.50" fill="#4f5b6e"/>
<rect x="3056.65" y="1271.02" width="2.5" height="3.60" fill="#4f5b6e"/>
<rect x="3056.65" y="1277.32" width="2.5" height="4.50" fill="#4f5b6e"/>
<rect x="3063.45" y="1263.82" width="2.5" height="4.50" fill="#4f5b6e"/>
<rect x="3063.45" y="1271.02" width="2.5" height="3.60" fill="#4f5b6e"/>
<rect x="3063.45" y="1277.32" width="2.5" height="4.50" fill="#4f5b6e"/>
<rect x="2983.7" y="1310.20" width="33.5" height="33.4" rx="5.5" stroke="#4a5568" stroke-width="2.6" fill="#fff"/>
<rect x="3043.05" y="1317.80" width="2.5" height="4.50" fill="#4f5b6e"/>
<rect x="3043.05" y="1325.00" width="2.5" height="3.60" fill="#4f5b6e"/>
<rect x="3043.05" y="1331.30" width="2.5" height="4.50" fill="#4f5b6e"/>
<rect x="3049.85" y="1317.80" width="2.5" height="4.50" fill="#4f5b6e"/>
<rect x="3049.85" y="1325.00" width="2.5" height="3.60" fill="#4f5b6e"/>
<rect x="3049.85" y="1331.30" width="2.5" height="4.50" fill="#4f5b6e"/>
<rect x="3056.65" y="1317.80" width="2.5" height="4.50" fill="#4f5b6e"/>
<rect x="3056.65" y="1325.00" width="2.5" height="3.60" fill="#4f5b6e"/>
<rect x="3056.65" y="1331.30" width="2.5" height="4.50" fill="#4f5b6e"/>
<rect x="3063.45" y="1317.80" width="2.5" height="4.50" fill="#4f5b6e"/>
<rect x="3063.45" y="1325.00" width="2.5" height="3.60" fill="#4f5b6e"/>
<rect x="3063.45" y="1331.30" width="2.5" height="4.50" fill="#4f5b6e"/>
</g>
<path d="M3400,502.5 L3409.3,516.3 H3390.7 Z" stroke="#8b8b8b" stroke-width="2.2" fill="#8b8b8b" stroke-linejoin="round"/>
<path d="M3400,1317.2 L3409.3,1303.4 H3390.7 Z" stroke="#8b8b8b" stroke-width="2.2" fill="#8b8b8b" stroke-linejoin="round"/>
<rect x="2981.5" y="1359.3" width="29.2" height="29.2" rx="5" stroke="#4a5568" stroke-width="2.3" fill="#fff"/>
<path d="M2984.7,1369.5 H2988.9 M2991.6,1369.5 H3007.3 M2989.2,1374 H2993.7 M2996.3,1374 H3007.3 M2989.2,1378.6 H2993.7 M2996.3,1378.6 H3007.3" stroke="#4a5568" stroke-width="2" fill="none" />
<rect x="2981.5" y="1687.6" width="29.2" height="29.2" rx="5" stroke="#4a5568" stroke-width="2.3" fill="#fff"/>
<path d="M3001.8,1697.8 V1694 H2990.6 L2996.7,1702 L2990.6,1710 H3001.8 V1706.3" stroke="#4a5568" stroke-width="2.2" fill="none" />
<rect x="3027.05" y="1418.90" width="2.5" height="4.50" fill="#222"/>
<rect x="3027.05" y="1426.10" width="2.5" height="3.60" fill="#222"/>
<rect x="3027.05" y="1432.40" width="2.5" height="4.50" fill="#222"/>
<rect x="3033.85" y="1418.90" width="2.5" height="4.50" fill="#222"/>
<rect x="3033.85" y="1426.10" width="2.5" height="3.60" fill="#222"/>
<rect x="3033.85" y="1432.40" width="2.5" height="4.50" fill="#222"/>
<rect x="3040.65" y="1418.90" width="2.5" height="4.50" fill="#222"/>
<rect x="3040.65" y="1426.10" width="2.5" height="3.60" fill="#222"/>
<rect x="3040.65" y="1432.40" width="2.5" height="4.50" fill="#222"/>
<rect x="3047.45" y="1418.90" width="2.5" height="4.50" fill="#222"/>
<rect x="3047.45" y="1426.10" width="2.5" height="3.60" fill="#222"/>
<rect x="3047.45" y="1432.40" width="2.5" height="4.50" fill="#222"/>
<circle cx="3360.9" cy="1428.1000000000001" r="12.3" stroke="#222" stroke-width="2.3" fill="none"/>
<path d="M3354.6,1421.8000000000002 l12.6,12.6 M3367.2,1421.8000000000002 l-12.6,12.6" stroke="#222" stroke-width="2.3" fill="none" stroke-linecap="round"/>
<rect x="3027.05" y="1747.00" width="2.5" height="4.50" fill="#222"/>
<rect x="3027.05" y="1754.20" width="2.5" height="3.60" fill="#222"/>
<rect x="3027.05" y="1760.50" width="2.5" height="4.50" fill="#222"/>
<rect x="3033.85" y="1747.00" width="2.5" height="4.50" fill="#222"/>
<rect x="3033.85" y="1754.20" width="2.5" height="3.60" fill="#222"/>
<rect x="3033.85" y="1760.50" width="2.5" height="4.50" fill="#222"/>
<rect x="3040.65" y="1747.00" width="2.5" height="4.50" fill="#222"/>
<rect x="3040.65" y="1754.20" width="2.5" height="3.60" fill="#222"/>
<rect x="3040.65" y="1760.50" width="2.5" height="4.50" fill="#222"/>
<rect x="3047.45" y="1747.00" width="2.5" height="4.50" fill="#222"/>
<rect x="3047.45" y="1754.20" width="2.5" height="3.60" fill="#222"/>
<rect x="3047.45" y="1760.50" width="2.5" height="4.50" fill="#222"/>
<circle cx="3360.9" cy="1756.2" r="12.3" stroke="#222" stroke-width="2.3" fill="none"/>
<path d="M3354.6,1749.9 l12.6,12.6 M3367.2,1749.9 l-12.6,12.6" stroke="#222" stroke-width="2.3" fill="none" stroke-linecap="round"/>
<rect x="3027.05" y="1810.10" width="2.5" height="4.50" fill="#222"/>
<rect x="3027.05" y="1817.30" width="2.5" height="3.60" fill="#222"/>
<rect x="3027.05" y="1823.60" width="2.5" height="4.50" fill="#222"/>
<rect x="3033.85" y="1810.10" width="2.5" height="4.50" fill="#222"/>
<rect x="3033.85" y="1817.30" width="2.5" height="3.60" fill="#222"/>
<rect x="3033.85" y="1823.60" width="2.5" height="4.50" fill="#222"/>
<rect x="3040.65" y="1810.10" width="2.5" height="4.50" fill="#222"/>
<rect x="3040.65" y="1817.30" width="2.5" height="3.60" fill="#222"/>
<rect x="3040.65" y="1823.60" width="2.5" height="4.50" fill="#222"/>
<rect x="3047.45" y="1810.10" width="2.5" height="4.50" fill="#222"/>
<rect x="3047.45" y="1817.30" width="2.5" height="3.60" fill="#222"/>
<rect x="3047.45" y="1823.60" width="2.5" height="4.50" fill="#222"/>
<circle cx="3360.9" cy="1819.3" r="12.3" stroke="#222" stroke-width="2.3" fill="none"/>
<path d="M3354.6,1813.0 l12.6,12.6 M3367.2,1813.0 l-12.6,12.6" stroke="#222" stroke-width="2.3" fill="none" stroke-linecap="round"/>
<path d="M3433.4,401 V420.7 M3440.2,401 V420.7 M3447.1,401 V420.7 M3453.9,401 V420.7" stroke="#212121" stroke-width="2.3" fill="none" />
<path d="M3433,588 H3454 V589.6 Q3452.5,592.5 3448.5,595.5 Q3445.6,597.6 3445.6,600 V602.6 L3441.4,605.8 V600 Q3441.4,597.6 3438.5,595.5 Q3434.5,592.5 3433,589.6 Z" stroke="#212121" stroke-width="2.1" fill="none" stroke-linejoin="miter"/>
</svg>
<svg width="3714" height="2119" viewBox="0 0 3714 2119"><defs><clipPath id="av"><circle cx="3653" cy="55.7" r="36"/></clipPath>
<radialGradient id="skin" cx="0.5" cy="0.45" r="0.6"><stop offset="0" stop-color="#e6b79c"/><stop offset="0.7" stop-color="#d49c80"/><stop offset="1" stop-color="#b98167"/></radialGradient>
<linearGradient id="hair" x1="0" y1="0" x2="0" y2="1"><stop offset="0" stop-color="#6b452a"/><stop offset="1" stop-color="#4a2f1c"/></linearGradient></defs>
<g clip-path="url(#av)">
<rect x="3610" y="15" width="90" height="85" fill="#dbdbdb"/>
<path d="M3624,100 V92 q6,-6 18,-9 h26 q10,3 16,9 V100 Z" fill="#c4d2e8"/>
<path d="M3644,78 h20 v12 q-10,6 -20,0 Z" fill="#c48f75"/>
<ellipse cx="3631.5" cy="59" rx="3.2" ry="6.5" fill="#c98f76"/><ellipse cx="3676" cy="57" rx="3.2" ry="6.5" fill="#c98f76"/>
<ellipse cx="3654" cy="59" rx="22" ry="30" fill="url(#skin)"/>
<path d="M3632,55 q-3,-22 8,-29 q12,-8 25,-3 q12,5 11,30 q-3,-10 -7,-15 q-12,-6 -28,-2 q-6,6 -9,19 Z" fill="url(#hair)"/>
<path d="M3637.5,52.5 h15 v8.5 h-15 Z M3656.5,52 h15 v8.5 h-15 Z M3652.5,55 h4" fill="rgba(255,255,255,.15)" stroke="#97a3a5" stroke-width="1.7"/>
<ellipse cx="3645" cy="56.5" rx="2.2" ry="1.3" fill="#4b3a33"/><ellipse cx="3664" cy="56" rx="2.2" ry="1.3" fill="#4b3a33"/>
<path d="M3654,58 q-3,8 -1,9 q3,1 5,0" fill="none" stroke="#b8806a" stroke-width="1.2"/>
<path d="M3645.5,71 q9.5,7 19,0 q-9.5,2 -19,0 Z" fill="#fbf6f2" stroke="#a9604f" stroke-width="1"/>
</g></svg>
<span class="t" style="left:115.60px;top:42px;font-size:35.5px;color:#ffffff;transform:scaleX(0.9987);-webkit-text-stroke:0.9px #ffffff;">Dynamics 365 Business Central</span>
<span class="t" style="left:232.44px;top:169px;font-size:32px;color:#505c6d;transform:scaleX(0.9584);">Customer Ledger Entries</span>
<span class="t" style="left:304.72px;top:277px;font-size:33.5px;color:#212121;transform:scaleX(0.8830);">Search</span>
<span class="t" style="left:548.60px;top:277px;font-size:33.5px;color:#212121;transform:scaleX(0.8874);">Analyse</span>
<span class="t" style="left:722.84px;top:276px;font-size:33px;color:#212121;transform:scaleX(0.9626);-webkit-text-stroke:0.8px #212121;">Customer by sales volume</span>
<span class="t" style="left:260.16px;top:362px;font-size:26px;color:#505c6d;transform:scaleX(1.0436);-webkit-text-stroke:0.7px #505c6d;">Customer Name</span>
<span class="t" style="left:1034.24px;top:362px;font-size:26px;color:#505c6d;transform:scaleX(1.0781);-webkit-text-stroke:0.7px #505c6d;">Document No.</span>
<span class="t" style="left:1455.73px;top:362px;font-size:26px;color:#505c6d;transform:scaleX(1.0698);-webkit-text-stroke:0.7px #505c6d;">Sum(Amount)</span>
<span class="t" style="left:1791.17px;top:362px;font-size:26px;color:#505c6d;transform:scaleX(1.0329);-webkit-text-stroke:0.7px #505c6d;">Sum(Remaining</span>
<span class="t" style="left:323.93px;top:435px;font-size:27.1px;color:#212121;transform:scaleX(0.9366);">Relecloud (83)</span>
<span class="t" style="left:324.80px;top:507px;font-size:27.1px;color:#212121;transform:scaleX(0.9486);">Alpine Ski House (55)</span>
<span class="t" style="left:323.83px;top:579px;font-size:27.1px;color:#212121;transform:scaleX(0.9749);">School of Fine Art (112)</span>
<span class="t" style="left:324.80px;top:651px;font-size:27.1px;color:#212121;transform:scaleX(0.9074);">Trey Research (101)</span>
<span class="t" style="left:324.80px;top:723px;font-size:27.1px;color:#212121;transform:scaleX(0.9833);">Adatum Corporation (68)</span>
<span class="t" style="left:324.80px;top:795px;font-size:27.1px;color:#212121;transform:scaleX(0.9813);">Adatum Corporation - Discussion (1)</span>
<span class="t" style="left:1033.10px;top:867px;font-size:27.1px;color:#212121;transform:scaleX(0.9478);">PS-INV103218</span>
<span class="t" style="left:385.20px;top:939px;font-size:27.1px;color:#212121;transform:scaleX(0.9966);">Sub Total Adatum Corporation - Discussion</span>
<span class="t" style="left:260.40px;top:1011px;font-size:27.1px;color:#212121;transform:scaleX(0.9642);">Total</span>
<span class="t" style="left:1528.07px;top:435px;font-size:27.1px;color:#212121;transform:scaleX(0.9349);">8,836.80</span>
<span class="t" style="left:1885.47px;top:435px;font-size:27.1px;color:#212121;transform:scaleX(0.9349);">8,836.80</span>
<span class="t" style="left:1528.00px;top:507px;font-size:27.1px;color:#212121;transform:scaleX(0.9349);">4,316.92</span>
<span class="t" style="left:1885.40px;top:507px;font-size:27.1px;color:#212121;transform:scaleX(0.9349);">4,316.92</span>
<span class="t" style="left:1514.27px;top:579px;font-size:27.1px;color:#212121;transform:scaleX(0.9319);">53,833.52</span>
<span class="t" style="left:1871.67px;top:579px;font-size:27.1px;color:#212121;transform:scaleX(0.9319);">53,833.52</span>
<span class="t" style="left:1528.00px;top:651px;font-size:27.1px;color:#212121;transform:scaleX(0.9355);">4,214.60</span>
<span class="t" style="left:1885.40px;top:651px;font-size:27.1px;color:#212121;transform:scaleX(0.9355);">4,214.60</span>
<span class="t" style="left:1527.06px;top:723px;font-size:27.1px;color:#212121;transform:scaleX(0.9439);">2,122.76</span>
<span class="t" style="left:1884.46px;top:723px;font-size:27.1px;color:#212121;transform:scaleX(0.9439);">2,122.76</span>
<span class="t" style="left:1563.54px;top:867px;font-size:27.1px;color:#00808a;transform:scaleX(0.9300);">12.72</span>
<span class="t" style="left:1920.94px;top:867px;font-size:27.1px;color:#00808a;transform:scaleX(0.9300);">12.72</span>
<span class="t" style="left:1563.54px;top:939px;font-size:27.1px;color:#212121;transform:scaleX(0.9300);">12.72</span>
<span class="t" style="left:1920.94px;top:939px;font-size:27.1px;color:#212121;transform:scaleX(0.9300);">12.72</span>
<span class="t" style="left:1514.27px;top:1011px;font-size:27.1px;color:#212121;transform:scaleX(0.9319);">73,337.32</span>
<span class="t" style="left:1871.67px;top:1011px;font-size:27.1px;color:#212121;transform:scaleX(0.9319);">73,337.32</span>
<span class="t" style="left:3062.67px;top:361px;font-size:27.1px;color:#212121;transform:scaleX(1.0169);">Pivot Mode</span>
<span class="t" style="left:3047.40px;top:433px;font-size:27.1px;color:#7d7d7d;transform:scaleX(0.9037);">Search...</span>
<span class="t" style="left:3091.26px;top:505px;font-size:27.1px;color:#212121;transform:scaleX(0.9707);">Posting Date</span>
<span class="t" style="left:3091.29px;top:559px;font-size:27.1px;color:#212121;transform:scaleX(0.9565);">Posting Date Year</span>
<span class="t" style="left:3091.24px;top:613px;font-size:27.1px;color:#212121;transform:scaleX(0.9783);">Posting Date Quarter</span>
<span class="t" style="left:3090.20px;top:667px;font-size:27.1px;color:#212121;transform:scaleX(1.0022);">Posting Date Month</span>
<span class="t" style="left:3090.21px;top:721px;font-size:27.1px;color:#212121;transform:scaleX(0.9969);">Document Date</span>
<span class="t" style="left:3091.26px;top:775px;font-size:27.1px;color:#212121;transform:scaleX(0.9723);">Document Date Year</span>
<span class="t" style="left:3090.22px;top:829px;font-size:27.1px;color:#212121;transform:scaleX(0.9884);">Document Date Quar...</span>
<span class="t" style="left:3090.17px;top:883px;font-size:27.1px;color:#212121;transform:scaleX(1.0142);">Document Date Month</span>
<span class="t" style="left:3090.22px;top:937px;font-size:27.1px;color:#212121;transform:scaleX(0.9889);">Document Type</span>
<span class="t" style="left:3090.18px;top:991px;font-size:27.1px;color:#212121;transform:scaleX(1.0080);">Document No.</span>
<span class="t" style="left:3091.22px;top:1045px;font-size:27.1px;color:#212121;transform:scaleX(0.9830);">Customer No.</span>
<span class="t" style="left:3091.22px;top:1099px;font-size:27.1px;color:#212121;transform:scaleX(0.9766);">Customer Name</span>
<span class="t" style="left:3090.20px;top:1153px;font-size:27.1px;color:#212121;transform:scaleX(0.9981);">Description</span>
<span class="t" style="left:3090.22px;top:1207px;font-size:27.1px;color:#212121;transform:scaleX(0.9925);">Department Code</span>
<span class="t" style="left:3091.21px;top:1261px;font-size:27.1px;color:#212121;transform:scaleX(0.9885);">Customergroup Code</span>
<div class="a" style="left:2969px;top:483px;width:449px;height:853px;overflow:hidden"><div class="a" style="left:-2969px;top:-483px">
<span class="t" style="left:3091.64px;top:1315px;font-size:27.1px;color:#212121;transform:scaleX(0.9593);">Currency Code</span>
</div></div>
<span class="t" style="left:3024.91px;top:1362px;font-size:27.1px;color:#212121;transform:scaleX(0.9458);">Row Groups</span>
<span class="t" style="left:3074.42px;top:1415px;font-size:27.1px;color:#212121;transform:scaleX(0.9817);">Customer Name</span>
<span class="t" style="left:3024.00px;top:1689px;font-size:27.1px;color:#212121;transform:scaleX(0.9192);">Values</span>
<span class="t" style="left:3074.41px;top:1744px;font-size:27.1px;color:#212121;transform:scaleX(0.9885);">Sum(Amount)</span>
<span class="t" style="left:3074.43px;top:1807px;font-size:27.1px;color:#212121;transform:scaleX(0.9723);">Sum(Remaining Am...</span>
<span class="t" style="left:277.08px;top:2020px;font-size:27.1px;color:#505c6d;transform:scaleX(0.9617);">Rows:</span>
<span class="t" style="left:356.60px;top:2020px;font-size:27.1px;color:#212121;transform:scaleX(0.9837);-webkit-text-stroke:0.55px #212121;">420</span>
<span class="t" style="left:1740.80px;top:2020px;font-size:27.1px;color:#505c6d;transform:scaleX(0.9783);">Total Rows:</span>
<span class="t" style="left:1885.00px;top:2020px;font-size:27.1px;color:#212121;transform:scaleX(0.9837);-webkit-text-stroke:0.55px #212121;">420</span>
<span class="t" style="left:3266.13px;top:2020px;font-size:27.1px;color:#505c6d;transform:scaleX(1.0335);">Filtered:</span>
<span class="t" style="left:3374.00px;top:2020px;font-size:27.1px;color:#212121;transform:scaleX(0.9793);-webkit-text-stroke:0.55px #212121;">420</span>
<span class="t" id="rt1" style="left:3427.5px;top:436px;font-size:26.5px;color:#212121;transform-origin:0 0;transform:rotate(90deg) translate(0,-100%);letter-spacing:-0.3px">Columns</span>
<span class="t" id="rt2" style="left:3427.5px;top:623px;font-size:26.5px;color:#212121;transform-origin:0 0;transform:rotate(90deg) translate(0,-100%);letter-spacing:-0.4px">Analysis Filters</span>
</div></div></body></html>
